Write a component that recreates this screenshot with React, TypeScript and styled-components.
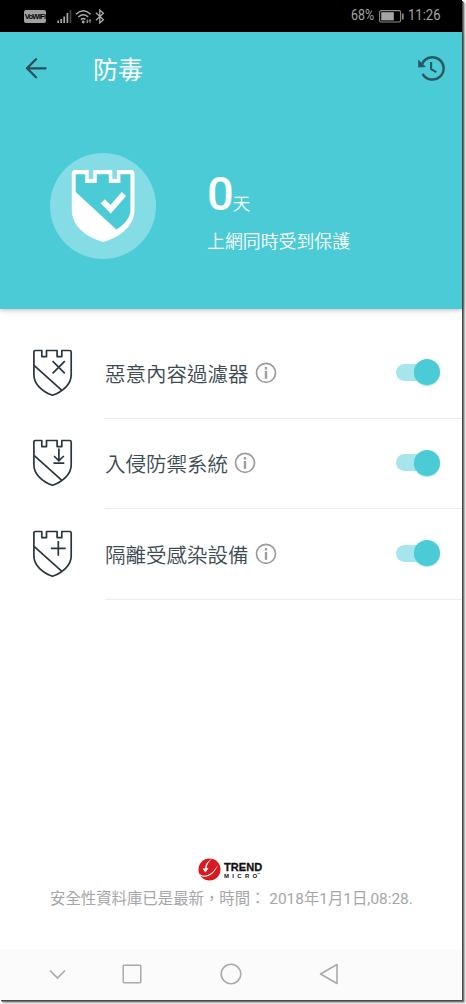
import React from "react";
import styled, { createGlobalStyle } from "styled-components";

const GlobalStyle = createGlobalStyle`
  * { box-sizing: border-box; }
  body { margin: 0; background: #fff; overflow: hidden; }
`;

const Page = styled.div`
  width: 466px;
  height: 1004px;
  background: #fff;
  overflow: hidden;
`;

const Phone = styled.div`
  width: 462px;
  height: 1000px;
  display: flex;
  flex-direction: column;
  background: #fff;
  box-shadow: 1px 1px 0 #4a4a4a, 2px 2px 1px #777, 3px 3px 2px #aaa;
  font-family: Roboto, "Noto Sans CJK TC", sans-serif;
  font-weight: 350;
  svg { display: block; flex: none; }
`;

const StatusBar = styled.div`
  height: 32px;
  flex: none;
  background: #000;
  display: flex;
  align-items: center;
  padding: 0 22px 0 24px;
  color: #a5a5a5;
`;

const VoWifi = styled.span`
  width: 22px;
  height: 13px;
  border-radius: 2px;
  background: #a0a0a0;
  color: #000;
  font: 700 7.5px/13px "Liberation Sans Narrow", "Liberation Sans", sans-serif;
  letter-spacing: -0.7px;
  display: flex;
  justify-content: center;
  white-space: nowrap;
  margin-right: 11px;
`;

const StatusText = styled.span<{ $width: number; $scale: number }>`
  width: ${(p) => p.$width}px;
  font-size: 14.5px;
  font-weight: 400;
  line-height: 32px;
  white-space: nowrap;
  transform: scaleX(${(p) => p.$scale});
  transform-origin: left center;
`;

const Gap = styled.div<{ $size: number }>`
  width: ${(p) => p.$size}px;
  flex: none;
`;

const Spacer = styled.div`
  flex: 1;
`;

const Hero = styled.header`
  height: 277px;
  flex: none;
  background: #4bcbd6;
  box-shadow: 0 1px 5px rgba(0, 0, 0, 0.28);
  color: #fff;
`;

const AppBar = styled.div`
  height: 73px;
  display: flex;
  align-items: center;
  padding: 0 17px 0 25px;
`;

const Title = styled.h1`
  margin: 4px 0 0 45px;
  font-size: 25px;
  font-weight: 400;
  line-height: 36px;
  flex: 1;
`;

const Summary = styled.div`
  display: flex;
  padding: 48px 0 0 50px;
`;

const Badge = styled.div`
  width: 106px;
  height: 106px;
  border-radius: 50%;
  background: #84dce4;
  display: flex;
  justify-content: center;
  padding-top: 16px;
`;

const Stats = styled.div`
  margin: 13px 0 0 51px;
`;

const Days = styled.div`
  display: flex;
  align-items: baseline;
  height: 54px;
  font-size: 17.5px;
  line-height: 56px;
`;

const Count = styled.span`
  font-size: 47px;
  font-weight: 500;
  letter-spacing: -1px;
`;

const Caption = styled.div`
  font-size: 17.9px;
  line-height: 24px;
  margin: 10px 0 0 0;
`;

const List = styled.main`
  padding-top: 19px;
  flex: 1;
`;

const Row = styled.div`
  display: flex;
  height: 90.6px;
  padding-left: 32px;
`;

const RowIcon = styled.div`
  width: 73px;
  padding-top: 19.6px;
`;

const RowBody = styled.div`
  flex: 1;
  display: flex;
  align-items: center;
  border-bottom: 1px solid #ececec;
  padding-right: 22px;
  color: #3d4b52;
  font-size: 20.5px;
`;

const Label = styled.span`
  margin: 4px 6px 0 0;
  line-height: 30px;
`;

const Switch = styled.div`
  width: 44px;
  height: 26px;
  display: flex;
  align-items: center;
  margin: -1px 0 0 auto;
`;

const Track = styled.div`
  width: 34px;
  height: 17px;
  border-radius: 9px;
  background: #a5e5eb;
`;

const Thumb = styled.div`
  width: 26px;
  height: 26px;
  flex: none;
  border-radius: 50%;
  background: #4bcbd6;
  margin-left: -16px;
  box-shadow: 0 1px 1px rgba(75, 203, 214, 0.45);
`;

const Footer = styled.footer`
  height: 91px;
  flex: none;
  color: #a6a6a9;
`;

const Brand = styled.div`
  display: flex;
  height: 24px;
  padding-left: 198px;
`;

const BrandText = styled.div`
  color: #111;
  font-family: "Liberation Sans", sans-serif;
  font-weight: 700;
  margin: 4px 0 0 3px;
`;

const Trend = styled.div`
  font-size: 11px;
  line-height: 11px;
  letter-spacing: 0.05px;
  -webkit-text-stroke: 0.3px #111;
`;

const Micro = styled.div`
  display: flex;
  font-size: 6px;
  line-height: 6px;
  letter-spacing: 3.3px;
  white-space: nowrap;
`;

const LastLetter = styled.span`
  letter-spacing: 0;
`;

const Tm = styled.span`
  font-size: 3px;
  line-height: 3px;
  letter-spacing: 0;
`;

const Update = styled.div`
  font-size: 15.4px;
  font-weight: 400;
  line-height: 22px;
  padding-left: 50px;
  margin-top: 6px;
  white-space: pre;
`;

const NavBar = styled.nav`
  height: 51px;
  flex: none;
  background: #fbfbfb;
  display: flex;
  align-items: center;
  padding: 0 0 1px 49px;
`;

const NavItem = styled.div<{ $gap: number }>`
  margin-right: ${(p) => p.$gap}px;
`;

type Mark = "cross" | "download" | "plus";

const marks: Record<Mark, string> = {
  cross: "M20.6 13.2L32.8 25.4M32.8 13.2L20.6 25.4",
  download: "M26.9 10.6V22.7M22 18L26.9 22.9L31.8 18M21.5 25.2H32.3",
  plus: "M26.3 12V26.8M18.9 19.4H33.7",
};

const ShieldIcon = ({ mark }: { mark: Mark }) => (
  <svg width="41" height="50" viewBox="0 0 41 50" fill="none" stroke="#29363c" strokeWidth="1.7">
    <path
      strokeLinejoin="round"
      d="M3.4 2.5H9.8V8.6H14.5V2.5H25.1V8.6H29.8V2.5H37.6Q39.2 2.5 39.2 4.1V27C39.2 36 31 43.5 20.5 47.3C10 43.5 1.9 36 1.9 27V4.1Q1.9 2.5 3.4 2.5Z"
    />
    <path d="M2.3 17.6L29.6 42.2" />
    <path d={marks[mark]} />
  </svg>
);

const HeroShield = () => (
  <svg width="64" height="74" viewBox="0 0 64 74">
    <path
      fill="#fff"
      d="M4 1H17.7V10H22.3V1H41.3V10H45.9V1H60Q63.5 1 63.5 4.5V41C63.5 56 50 68 32.3 73C14 68 .8 56 .8 41V4.5Q.8 1 4 1Z"
    />
    <path
      fill="#4bcbd6"
      d="M4.7 5.2H14.2V14H25.8V5.2H37.8V14H49.4V5.2H59.4V41C59.4 48 54 55.5 45.3 60.5L4.7 23Z"
    />
    <path fill="none" stroke="#fff" strokeWidth="5.8" d="M31.8 32.2L39.7 40.2L53 25" />
  </svg>
);

const SignalIcon = () => (
  <svg width="15" height="15" viewBox="0 0 15 15" fill="none" strokeWidth="1.7">
    <path stroke="#aaa" d="M1.2 14V11.5M4.2 14V10M7.2 14V7.5M10.4 14V4" />
    <path stroke="#444" d="M13.5 14V1" />
  </svg>
);

const WifiIcon = () => (
  <svg width="17" height="15" viewBox="0 0 17 15" fill="none" stroke="#aaa" strokeWidth="1.5">
    <path d="M1 5.2Q8.3-1.6 15.6 5.2M3.4 8Q8.3 3.6 13.2 8M5.8 10.6Q8.3 8.4 10.4 10.4" />
    <circle cx="8.2" cy="13" r=".7" />
    <path strokeWidth="1" d="M12.3 10.5V13.6M11.3 12.6L12.3 13.6L13.3 12.6M15 13.8V10.7M14 11.7L15 10.7L16 11.7" />
  </svg>
);

const BluetoothIcon = () => (
  <svg width="10" height="15" viewBox="0 0 10 15" fill="none" stroke="#aaa" strokeWidth="1.3">
    <path d="M.9 3.8L8.4 10.8L4.8 14V1L8.4 4.2L.9 11.2" />
  </svg>
);

const BatteryIcon = () => (
  <svg width="25" height="13" viewBox="0 0 25 13">
    <rect x=".6" y=".6" width="21" height="11.4" rx="1.6" fill="none" stroke="#8c8c8c" strokeWidth="1.1" />
    <rect x="2.2" y="2.2" width="12.6" height="8.2" fill="#a5a5a5" />
    <rect x="23.1" y="3.5" width="1.5" height="6" fill="#9c9c9c" />
  </svg>
);

const BackIcon = () => (
  <svg width="23" height="22" viewBox="0 0 23 22" fill="none" stroke="#2b4d57" strokeWidth="2.3">
    <path strokeLinecap="round" strokeLinejoin="round" d="M20.5 10.3H2.5M11 1.3L2 10.3L11 19.3" />
  </svg>
);

const HistoryIcon = () => (
  <svg width="28" height="27" viewBox="0 0 28 27" fill="none" stroke="#2b5862" strokeWidth="2.5">
    <path d="M4.9 9.5A11.2 11.2 0 1 1 5.6 18.8" />
    <path fill="#2b5862" stroke="none" d="M1.2 4.5L8.9 12.1L1.2 12.5Z" />
    <path strokeWidth="2.1" d="M14.1 7V14.1L19.3 17.2" />
  </svg>
);

const InfoIcon = () => (
  <svg width="22" height="22" viewBox="0 0 22 22">
    <circle cx="11" cy="10.8" r="9.5" fill="none" stroke="#9b9c9f" strokeWidth="1.7" />
    <rect x="9.8" y="5.1" width="2.4" height="2.4" rx=".6" fill="#9b9c9f" />
    <rect x="9.8" y="9" width="2.4" height="7.8" fill="#9b9c9f" />
  </svg>
);

const TrendLogo = () => (
  <svg width="23" height="23" viewBox="0 0 23 23">
    <circle cx="11.5" cy="11.5" r="11" fill="#d71920" />
    <path fill="#fff" d="M14.4.6C9.8 3 7.2 6.5 7.2 10.4L4.6 10.6L7.3 14.6L10.6 10.2L8.7 10.3C8.7 6.8 11.2 3 14.4.6Z" />
    <path fill="#fff" d="M1.3 15.8C6 19.8 14 17.6 20 6.5C17 15.4 9 22 1.9 17.2Z" />
  </svg>
);

const rows: { label: string; mark: Mark }[] = [
  { label: "惡意內容過濾器", mark: "cross" },
  { label: "入侵防禦系統", mark: "download" },
  { label: "隔離受感染設備", mark: "plus" },
];

export default function App() {
  return (
    <Page>
      <GlobalStyle />
      <Phone>
        <StatusBar>
          <VoWifi>VoWiFi</VoWifi>
          <SignalIcon />
          <Gap $size={3} />
          <WifiIcon />
          <Gap $size={3} />
          <BluetoothIcon />
          <Spacer />
          <StatusText $width={28} $scale={0.86}>68%</StatusText>
          <BatteryIcon />
          <Gap $size={4} />
          <StatusText $width={32} $scale={0.9}>11:26</StatusText>
        </StatusBar>
        <Hero>
          <AppBar>
            <BackIcon />
            <Title>防毒</Title>
            <HistoryIcon />
          </AppBar>
          <Summary>
            <Badge>
              <HeroShield />
            </Badge>
            <Stats>
              <Days>
                <Count>0</Count>天
              </Days>
              <Caption>上網同時受到保護</Caption>
            </Stats>
          </Summary>
        </Hero>
        <List>
          {rows.map((r) => (
            <Row key={r.mark}>
              <RowIcon>
                <ShieldIcon mark={r.mark} />
              </RowIcon>
              <RowBody>
                <Label>{r.label}</Label>
                <InfoIcon />
                <Switch>
                  <Track />
                  <Thumb />
                </Switch>
              </RowBody>
            </Row>
          ))}
        </List>
        <Footer>
          <Brand>
            <TrendLogo />
            <BrandText>
              <Trend>TREND</Trend>
              <Micro>
                <span>MICR</span>
                <LastLetter>O</LastLetter>
                <Tm>™</Tm>
              </Micro>
            </BrandText>
          </Brand>
          <Update>安全性資料庫已是最新，時間： 2018年1月1日,08:28.</Update>
        </Footer>
        <NavBar>
          <NavItem $gap={56}>
            <svg width="17" height="11" viewBox="0 0 17 11" fill="none" stroke="#aaa" strokeWidth="1.6">
              <path d="M1 1.5L8.5 9L16 1.5" />
            </svg>
          </NavItem>
          <NavItem $gap={78}>
            <svg width="20" height="20" viewBox="0 0 20 20" fill="none" stroke="#aaa" strokeWidth="1.5">
              <rect x="1.2" y="1.2" width="17.6" height="17.6" rx="1" />
            </svg>
          </NavItem>
          <NavItem $gap={77}>
            <svg width="22" height="22" viewBox="0 0 22 22" fill="none" stroke="#aaa" strokeWidth="1.6">
              <circle cx="11" cy="11" r="9.8" />
            </svg>
          </NavItem>
          <NavItem $gap={0}>
            <svg width="20" height="22" viewBox="0 0 20 22" fill="none" stroke="#aaa" strokeWidth="1.6">
              <path strokeLinejoin="round" d="M18 1.5V20.5L1.5 11Z" />
            </svg>
          </NavItem>
        </NavBar>
      </Phone>
    </Page>
  );
}
